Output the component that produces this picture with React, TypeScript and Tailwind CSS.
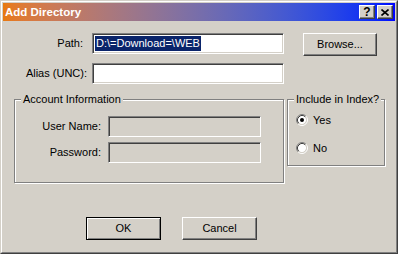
import React from "react";

const raised =
  "border border-t-white border-l-white border-r-[#404040] border-b-[#404040] shadow-[inset_-1px_-1px_0_#808080] bg-[#d4d0c8]";
const sunken =
  "border border-t-[#808080] border-l-[#808080] border-r-white border-b-white shadow-[inset_1px_1px_0_#404040,inset_-1px_-1px_0_#d4d0c8]";
const etched =
  "border border-[#808080] shadow-[inset_1px_1px_0_white,1px_1px_0_white]";

function Radio({ checked }: { checked?: boolean }) {
  return (
    <svg width="12" height="12" viewBox="0 0 12 12" className="block shrink-0">
      <circle cx="6" cy="6" r="4.2" fill="white" />
      <path d="M2.11 9.89 A5.5 5.5 0 0 1 9.89 2.11" fill="none" stroke="#808080" strokeWidth="1" />
      <path d="M9.89 2.11 A5.5 5.5 0 0 1 2.11 9.89" fill="none" stroke="#ffffff" strokeWidth="1" />
      <path d="M2.82 9.18 A4.5 4.5 0 0 1 9.18 2.82" fill="none" stroke="#404040" strokeWidth="1" />
      <path d="M9.18 2.82 A4.5 4.5 0 0 1 2.82 9.18" fill="none" stroke="#d4d0c8" strokeWidth="1" />
      {checked && <circle cx="6" cy="6" r="2" fill="black" />}
    </svg>
  );
}

export default function App() {
  return (
    <div className="w-[398px] h-[254px] bg-[#d4d0c8] border border-t-[#d4d0c8] border-l-[#d4d0c8] border-r-[#404040] border-b-[#404040] text-[11px] leading-[13px] text-black font-[Liberation_Sans,Arial,sans-serif]">
      <div className="h-full border border-t-white border-l-white border-r-[#808080] border-b-[#808080] p-px flex flex-col">
        {/* Title bar */}
        <div className="h-[18px] shrink-0 flex items-center pl-[2px] pr-[2px] bg-gradient-to-r from-[#e8790c] to-[#0000ff]">
          <span className="text-white font-bold text-[11.5px] leading-[14px]">Add Directory</span>
          <div className="ml-auto flex gap-[2px]">
            <div className={`${raised} w-[16px] h-[14px] flex items-center justify-center`}>
              <span className="font-bold text-[12px] leading-[12px] font-[Liberation_Sans,Arial,sans-serif]">?</span>
            </div>
            <div className={`${raised} w-[16px] h-[14px] flex items-center justify-center`}>
              <svg width="8" height="7" viewBox="0 0 8 7" className="block">
                <path d="M0.5 0.5 L7.5 6.5 M7.5 0.5 L0.5 6.5" stroke="black" strokeWidth="1.6" fill="none" />
              </svg>
            </div>
          </div>
        </div>

        {/* Body */}
        <div className="flex flex-col flex-1">
          {/* Path row */}
          <div className="flex items-start mt-[12px]">
            <div className="w-[82px] h-[21px] flex items-center justify-end pr-[2px]">Path:</div>
            <div className={`${sunken} ml-[7px] w-[192px] h-[21px] bg-white flex items-center pl-[2px]`}>
              <span className="bg-[#0a246a] text-white px-px leading-[15px]">D:\=Download=\WEB</span>
            </div>
            <div className={`${raised} ml-[19px] w-[74px] h-[23px] flex items-center justify-center`}>
              Browse...
            </div>
          </div>

          {/* Alias row */}
          <div className="flex items-start mt-[7px]">
            <div className="w-[84px] h-[21px] flex items-center justify-end">Alias (UNC):</div>
            <div className={`${sunken} ml-[5px] w-[192px] h-[21px] bg-white`} />
          </div>

          {/* Groups */}
          <div className="flex items-start mt-[9px]">
            <fieldset className={`${etched} ml-[11px] w-[270px] h-[90px] flex flex-col`}>
              <legend className="ml-[6px] px-[2px] bg-[#d4d0c8] leading-[13px]">Account Information</legend>
              <div className="flex flex-col pt-[10px]">
                <div className="flex items-start">
                  <div className="w-[86px] h-[21px] flex items-center justify-end">User Name:</div>
                  <div className={`${sunken} ml-[7px] w-[153px] h-[21px] bg-[#d4d0c8]`} />
                </div>
                <div className="flex items-start mt-[5px]">
                  <div className="w-[86px] h-[21px] flex items-center justify-end">Password:</div>
                  <div className={`${sunken} ml-[7px] w-[153px] h-[21px] bg-[#d4d0c8]`} />
                </div>
              </div>
            </fieldset>

            <fieldset className={`${etched} ml-[3px] w-[98px] h-[73px] flex flex-col`}>
              <legend className="ml-[6px] px-[2px] bg-[#d4d0c8] leading-[13px]">Include in Index?</legend>
              <div className="flex flex-col pt-[8px] pl-[8px]">
                <div className="flex items-center h-[12px]">
                  <Radio checked />
                  <span className="ml-[5px]">Yes</span>
                </div>
                <div className="flex items-center h-[12px] mt-[16px]">
                  <Radio />
                  <span className="ml-[5px]">No</span>
                </div>
              </div>
            </fieldset>
          </div>

          {/* Buttons */}
          <div className="flex items-start mt-[34px]">
            <div className="ml-[83px] w-[75px] h-[23px] border border-black shadow-[inset_1px_1px_0_white,inset_-1px_-1px_0_#808080] flex items-center justify-center">
              OK
            </div>
            <div className={`${raised} ml-[21px] w-[75px] h-[23px] flex items-center justify-center`}>
              Cancel
            </div>
          </div>
        </div>
      </div>
    </div>
  );
}
